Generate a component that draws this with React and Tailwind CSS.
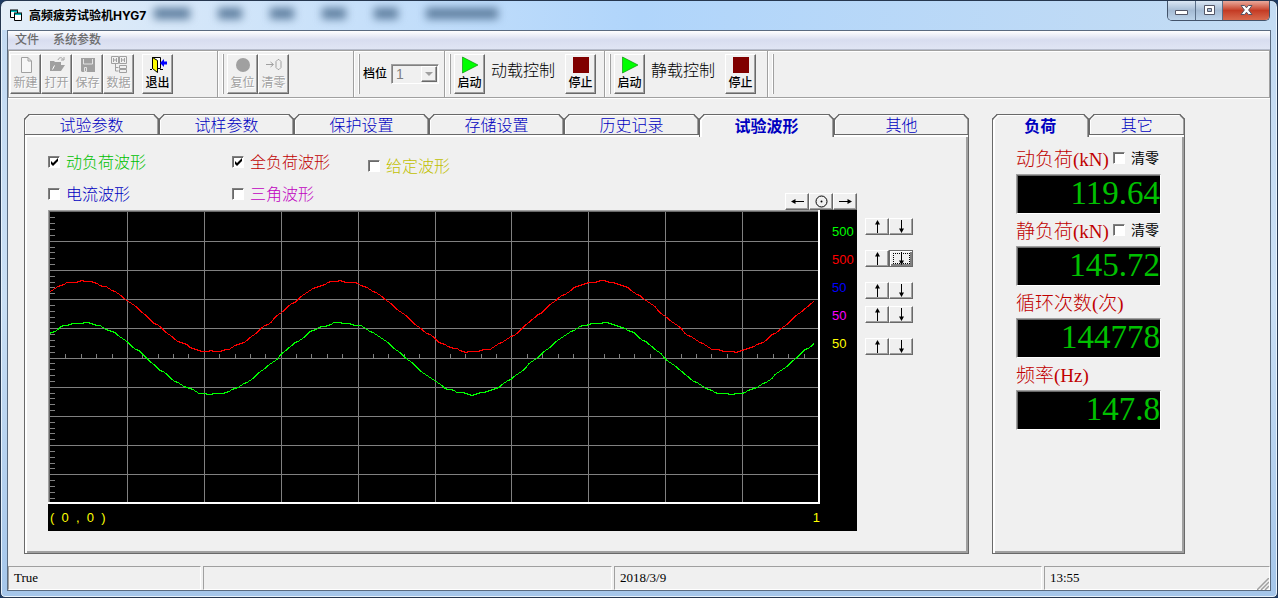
import React, { useState } from "react";

const RAISED =
  "border border-t-white border-l-white border-r-[#696969] border-b-[#696969] bg-[#f0f0f0] shadow-[inset_-1px_-1px_0_#a0a0a0]";
const SUNKEN =
  "border border-t-[#a0a0a0] border-l-[#a0a0a0] border-r-white border-b-white";
const BODY =
  "border border-[#696969] shadow-[inset_2px_2px_0_#fff,inset_-2px_-2px_0_#a0a0a0]";

const mainTabs = ["试验参数", "试样参数", "保护设置", "存储设置", "历史记录", "试验波形", "其他"];
const sideTabs = ["负荷", "其它"];

const waves = [
  { id: "dynamic", label: "动负荷波形", color: "text-[#00c000]", checked: true },
  { id: "full", label: "全负荷波形", color: "text-[#c00000]", checked: true },
  { id: "given", label: "给定波形", color: "text-[#c0c000]", checked: false, low: true },
  { id: "current", label: "电流波形", color: "text-[#0000c0]", checked: false },
  { id: "triangle", label: "三角波形", color: "text-[#c000c0]", checked: false },
];

const scales = [
  { value: "500", color: "text-[#00ff00]" },
  { value: "500", color: "text-[#ff0000]" },
  { value: "50", color: "text-[#0000ff]" },
  { value: "50", color: "text-[#ff00ff]" },
  { value: "50", color: "text-[#ffff00]" },
];

// scale buttons, grouped the way they sit beside the chart
const scaleGroups = [[0], [1], [2, 3], [4]];

const readings = [
  { label: "动负荷(kN)", value: "119.64", reset: true },
  { label: "静负荷(kN)", value: "145.72", reset: true },
  { label: "循环次数(次)", value: "144778" },
  { label: "频率(Hz)", value: "147.8" },
];

function buildWave(center, amp, seed) {
  const points = [];
  for (let x = 1; x <= 767; x += 3) {
    const noise = Math.sin(x * 0.37 + seed) * Math.sin(x * 0.113 + seed * 2) * 0.9;
    const y = center - amp * Math.cos(((x - 34) / 259.5) * Math.PI * 2) + noise;
    points.push(`${x},${Math.round(y)}.5`);
  }
  return points.join(" ");
}

function Check({ id, checked }) {
  return (
    <span className="relative flex h-3 w-3 shrink-0">
      <input
        id={id}
        type="checkbox"
        defaultChecked={checked}
        className="peer h-3 w-3 appearance-none border border-t-[#808080] border-l-[#808080] border-r-white border-b-white bg-white shadow-[inset_1px_1px_0_#696969]"
      />
      <svg
        viewBox="0 0 12 12"
        className="pointer-events-none absolute inset-0 hidden h-3 w-3 peer-checked:block"
      >
        <path d="M3 5v3l2 2 5-5V2L5 7z" fill="#000" />
      </svg>
    </span>
  );
}

function ToolButton({ label, disabled, children }) {
  return (
    <button
      type="button"
      disabled={disabled}
      className={`flex h-10 w-[31px] flex-col items-center pt-[1px] text-xs leading-[18px] ${RAISED} ${
        disabled ? "text-[#a0a0a0] [text-shadow:1px_1px_0_#fff]" : "font-medium text-black"
      }`}
    >
      <svg viewBox="0 0 18 18" className="h-[18px] w-[18px] shrink-0" fill="none">
        {children}
      </svg>
      <span className="whitespace-nowrap">{label}</span>
    </button>
  );
}

function Band({ className, first, children }) {
  return (
    <div
      className={`flex h-[46px] shrink-0 items-center ${
        first ? "" : "border-l border-[#a0a0a0] pl-[4px] shadow-[inset_1px_0_0_#fff]"
      } ${className}`}
    >
      {!first && (
        <span className="mr-[3px] h-10 w-[2px] shrink-0 border-r border-r-[#a0a0a0] bg-white" />
      )}
      {children}
    </div>
  );
}

function StartIcon() {
  return <path d="M1.500 1v16l15.500-8z" fill="#00ff00" stroke="#008000" strokeWidth="0.6" />;
}

function StopIcon() {
  return <path d="M1 1h16v16H1z" fill="#800000" />;
}

function Tabs({ items, active, onSelect }) {
  return (
    <div role="tablist" className="relative z-10 flex">
      {items.map((item, i) => (
        <button
          key={item}
          type="button"
          role="tab"
          aria-selected={i === active}
          onClick={() => onSelect(i)}
          className={`min-w-0 flex-1 rounded-t-[5px] border border-b-0 border-[#696969] bg-[#f0f0f0] text-base leading-5 text-[#0000c0] [corner-shape:bevel] ${
            i === active
              ? "-mb-[3px] h-[23px] font-bold shadow-[inset_2px_1px_0_#fff,inset_-1px_0_0_#a0a0a0]"
              : "h-5 font-light shadow-[inset_1px_1px_0_#fff,inset_-1px_0_0_#a0a0a0]"
          }`}
        >
          {item}
        </button>
      ))}
    </div>
  );
}

function ArrowButton({ dir, focused }) {
  const rotate = { up: 0, right: 90, down: 180, left: 270 }[dir];
  return (
    <button
      type="button"
      aria-label={dir}
      className={`flex h-[17px] w-6 items-center justify-center ${
        focused
          ? "border border-[#696969] bg-[#f0f0f0] shadow-[inset_1px_1px_0_#fff,inset_-2px_-2px_0_#808080]"
          : RAISED
      }`}
    >
      <span
        className={`flex h-[11px] w-[17px] items-center justify-center ${
          focused ? "border border-dotted border-black" : ""
        }`}
      >
        <svg viewBox="0 0 13 13" className="h-[13px] w-[13px] shrink-0">
          <g transform={`rotate(${rotate} 6.5 6.5)`}>
            <path d="M6 3h1v10H6z M6.5 0L9 4.5H4z" fill="#000" />
          </g>
        </svg>
      </span>
    </button>
  );
}

function Plot() {
  const cols = [1, 2, 3, 4, 5, 6, 7, 8, 9];
  const ticks = Array.from({ length: 49 }, (_, i) => i + 1);
  return (
    <svg
      viewBox="0 0 772 294"
      preserveAspectRatio="none"
      className="block h-[294px] w-full"
      fill="none"
      shapeRendering="crispEdges"
    >
      <g stroke="#808080">
        {cols.map((i) => (
          <path key={`v${i}`} d={`M${Math.round(2 + i * 76.9)}.5 2V292`} />
        ))}
        {cols.map((i) => (
          <path key={`h${i}`} d={`M2 ${Math.round(1.5 + i * 29.2)}.5H770`} />
        ))}
        {ticks.map((i) => (
          <path
            key={`t${i}`}
            d={`M2 ${Math.round(1.5 + i * 5.84)}.5h5 M${Math.round(2 + i * 15.38)}.5 144v5`}
          />
        ))}
      </g>
      <polyline points={buildWave(106, 35.3, 1)} stroke="#ff0000" />
      <polyline points={buildWave(148, 35.7, 2)} stroke="#00ff00" />
      <path d="M0 .5H771M.5 0V293" stroke="#a0a0a0" />
      <path d="M1 1.5H770M1.5 1V292" stroke="#696969" />
      <path d="M0 293H772M771 0V294" stroke="#fff" strokeWidth="2" />
    </svg>
  );
}

function TitleBar() {
  return (
    <header className="flex h-[29px] items-start justify-between overflow-hidden">
      <div className="flex h-full items-center gap-[6px] pl-[2px]">
        <svg viewBox="0 0 13 13" className="h-[13px] w-[13px]">
          <path d="M.5 1.500h7v7h-7z" fill="#fff" stroke="#000" />
          <path d="M4.500 4.500h7v7h-7z" fill="#fff" stroke="#000" />
          <path d="M1 1h6v2H1zM5 4h6v2H5z" fill="#00c0c0" />
          <path d="M0 1h8M4 4h8" stroke="#000" />
        </svg>
        <h1 className="text-xs font-bold whitespace-nowrap">高频疲劳试验机HYG7</h1>
        {/* window behind the glass */}
        <div aria-hidden="true" className="flex gap-7 pb-1 pl-[2px] blur-[4px]">
          <span className="h-[11px] w-9 bg-[#5d7d9e]" />
          <span className="h-[11px] w-6 bg-[#5d7d9e]" />
          <span className="h-[11px] w-6 bg-[#5d7d9e]" />
          <span className="h-[11px] w-6 bg-[#5d7d9e]" />
          <span className="h-[11px] w-6 bg-[#5d7d9e]" />
          <span className="h-[11px] w-[72px] bg-[#5d7d9e]" />
        </div>
      </div>
      <div className="flex h-5 overflow-hidden rounded-b-[5px] border border-t-0 border-[#43536a]">
        <button
          type="button"
          aria-label="最小化"
          className="flex w-7 items-center justify-center border-r border-[#5b6f88] bg-linear-to-b from-[#dbe7f4] via-[#a5bbd4] to-[#bcd3ea]"
        >
          <svg viewBox="0 0 13 11" className="h-[11px] w-[13px]">
            <path d="M.5 5.5h12v4H.5z" fill="#fff" stroke="#535666" />
          </svg>
        </button>
        <button
          type="button"
          aria-label="最大化"
          className="flex w-[27px] items-center justify-center border-r border-[#5b6f88] bg-linear-to-b from-[#dbe7f4] via-[#a5bbd4] to-[#bcd3ea]"
        >
          <svg viewBox="0 0 13 11" className="h-[11px] w-[13px]">
            <path
              d="M1.5.5h10v9h-10zM4.5 3.5v3h4v-3z"
              fill="#fff"
              fillRule="evenodd"
              stroke="#535666"
            />
          </svg>
        </button>
        <button
          type="button"
          aria-label="关闭"
          className="flex w-[46px] items-center justify-center bg-linear-to-b from-[#e9a99c] via-[#c43b24] to-[#d8694d]"
        >
          <svg viewBox="0 0 13 11" className="h-[11px] w-[13px]">
            <path
              d="M1 .5h3.6L6.500 2.800 8.400.5H12L8.600 5 12 9.500H8.400L6.500 7.200 4.600 9.500H1L4.400 5z"
              fill="#fff"
              stroke="#535666"
            />
          </svg>
        </button>
      </div>
    </header>
  );
}

function Toolbar() {
  return (
    <div className="flex h-12 overflow-hidden border border-[#a0a0a0] shadow-[inset_1px_1px_0_#fff,0_1px_0_#fff]">
      <Band first className="w-[208px] pl-[1px]">
        <ToolButton label="新建" disabled>
          <path d="M4.500 1.500H11l3.500 3.500v11.500h-10zM11 1.500V5h3.500" stroke="#a0a0a0" fill="#f6f6f6" />
        </ToolButton>
        <ToolButton label="打开" disabled>
          <path d="M2 15V5h4l1 1h6v3h4l-4 6z" fill="#a0a0a0" />
          <path d="M4.500 13.500l2-4" stroke="#fff" />
          <path d="M10 4c1-3 4-3 5-.5M16 1v3h-3" stroke="#a0a0a0" />
        </ToolButton>
        <ToolButton label="保存" disabled>
          <path d="M2 2h14v14H3l-1-1z" fill="#a0a0a0" />
          <path d="M5.500 11.500h2v4h-2zM4.500 3v5h9V3" stroke="#e4e4e4" />
        </ToolButton>
        <ToolButton label="数据" disabled>
          <path
            d="M1.500.5h7v7h-7zM9.500.5h7v7h-7zM3.500 2v4M6.500 2v4M3.500 4h3M11.500 2v4M14.500 2v4M11.500 4h3M5.500 8v7h3M5.500 11.500h3M9.500 9.500h7v3h-7zM9.500 13.500h7v3h-7z"
            stroke="#a0a0a0"
          />
        </ToolButton>
        <div className="ml-2">
          <ToolButton label="退出">
            <path d="M3.500 1.500h8v11h-8z" fill="#fff" stroke="#000" />
            <path d="M3.500 1.500l5 3v12l-5-4z" fill="#ffff00" stroke="#000" />
            <path d="M1 13.500h2M11 13.500h3" stroke="#000" />
            <path d="M11 7l4-4v2.500h3v3h-3V11z" fill="#0000ff" />
          </ToolButton>
        </div>
      </Band>
      <Band className="w-[136px]">
        <ToolButton label="复位" disabled>
          <circle cx="9" cy="9" r="7" fill="#a0a0a0" />
        </ToolButton>
        <ToolButton label="清零" disabled>
          <path d="M1 8.500h7M5.500 6l3 2.500-3 2.500M13 3.500h1l2 2v6l-2 2h-1l-2-2v-6z" stroke="#a0a0a0" />
        </ToolButton>
      </Band>
      <Band className="w-[91px]">
        <label htmlFor="gear" className="text-xs font-medium whitespace-nowrap text-black">
          档位
        </label>
        <div className="relative ml-1">
          <select
            id="gear"
            disabled
            className="block h-5 w-12 appearance-none border border-[#a0a0a0] border-r-white border-b-white bg-[#f0f0f0] pl-1 font-['Liberation_Sans'] text-sm leading-4 text-[#808080] shadow-[inset_1px_1px_0_#808080]"
          >
            <option>1</option>
          </select>
          <span
            className={`pointer-events-none absolute top-[2px] right-[2px] flex h-4 w-4 items-center justify-center ${RAISED}`}
          >
            <svg viewBox="0 0 8 4" className="h-1 w-2">
              <path d="M0 0h8L4 4z" fill="#a0a0a0" />
            </svg>
          </span>
        </div>
      </Band>
      <Band className="w-40">
        <ToolButton label="启动">
          <StartIcon />
        </ToolButton>
        <span className="mx-[6px] mb-2 w-[68px] text-base leading-5 font-light whitespace-nowrap">
          动载控制
        </span>
        <ToolButton label="停止">
          <StopIcon />
        </ToolButton>
      </Band>
      <Band className="w-[163px]">
        <ToolButton label="启动">
          <StartIcon />
        </ToolButton>
        <span className="mx-[6px] mb-2 w-[68px] text-base leading-5 font-light whitespace-nowrap">
          静载控制
        </span>
        <ToolButton label="停止">
          <StopIcon />
        </ToolButton>
      </Band>
      <Band className="w-5" />
    </div>
  );
}

function WavePanel() {
  return (
    <div className={`flex flex-1 pl-[23px] pb-[22px] pr-[55px] ${BODY}`}>
      <div className="min-w-0 flex-1">
        <div className="flex items-end justify-between pt-[11px]">
          <div className="grid auto-rows-[32px] grid-cols-[184px_136px_120px]">
            {waves.map((wave) => (
              <div
                key={wave.id}
                className={`flex h-6 items-center gap-[6px] ${wave.low ? "self-end" : "self-center"}`}
              >
                <Check id={wave.id} checked={wave.checked} />
                <label
                  htmlFor={wave.id}
                  className={`text-base leading-6 font-light whitespace-nowrap ${wave.color}`}
                >
                  {wave.label}
                </label>
              </div>
            ))}
          </div>
          <div className="flex">
            <ArrowButton dir="left" />
            <button
              type="button"
              aria-label="center"
              className={`flex h-[17px] w-6 items-center justify-center ${RAISED}`}
            >
              <svg viewBox="0 0 13 13" className="h-[13px] w-[13px] shrink-0">
                <circle cx="6.5" cy="6.5" r="5.5" fill="none" stroke="#000" />
                <circle cx="6.5" cy="6.5" r="1" fill="#000" />
              </svg>
            </button>
            <ArrowButton dir="right" />
          </div>
        </div>
        <div className="flex bg-black font-['Liberation_Sans'] text-[13px]">
          <div className="min-w-0 flex-1">
            <Plot />
            <div className="flex h-[27px] items-center justify-between pl-[2px] leading-6 text-[#ffff00]">
              <span className="whitespace-pre">{"(  0  ,  0  )"}</span>
              <span>1</span>
            </div>
          </div>
          <div className="w-[37px] pt-2 pl-3">
            {scales.map((scale, i) => (
              <div key={i} className={`leading-7 ${scale.color}`}>
                {scale.value}
              </div>
            ))}
          </div>
        </div>
      </div>
      <div className="ml-2 flex flex-col gap-[15px] pt-[83px]">
        {scaleGroups.map((group) => (
          <div key={group[0]} className="flex flex-col gap-[7px]">
            {group.map((n) => (
              <div key={n} className="flex">
                <ArrowButton dir="up" />
                <ArrowButton dir="down" focused={n === 1} />
              </div>
            ))}
          </div>
        ))}
      </div>
    </div>
  );
}

function LoadPanel() {
  return (
    <div className={`flex-1 px-[23px] pt-[7px] ${BODY}`}>
      {readings.map((item, i) => (
        <div key={item.label}>
          <div className="flex h-8 items-center">
            <span className="pt-1 font-['Liberation_Serif','Noto_Sans_CJK_SC',serif] text-[19px] leading-7 font-light whitespace-nowrap text-[#c00000]">
              {item.label}
            </span>
            {item.reset && (
              <span className="ml-auto flex items-center gap-[6px] pr-[2px]">
                <Check id={`reset${i}`} />
                <label htmlFor={`reset${i}`} className="text-sm whitespace-nowrap">
                  清零
                </label>
              </span>
            )}
          </div>
          <div
            className={`h-10 bg-black text-right font-['Liberation_Serif'] text-[33px] leading-9 text-[#00c000] shadow-[inset_1px_1px_0_#696969] ${SUNKEN}`}
          >
            {item.value}
          </div>
        </div>
      ))}
    </div>
  );
}

function StatusBar() {
  const pane = `h-6 truncate pl-[5px] leading-[22px] ${SUNKEN}`;
  return (
    <footer className="relative flex gap-[2px] font-['Liberation_Serif'] text-[13px] text-black">
      <div className={`w-[193px] ${pane}`}>True</div>
      <div className={`w-[409px] ${pane}`} />
      <div className={`min-w-0 flex-1 ${pane}`}>2018/3/9</div>
      <div className={`w-[226px] ${pane}`}>13:55</div>
      <svg viewBox="0 0 12 12" className="absolute right-[1px] bottom-0 h-3 w-3">
        <path d="M0 12L12 0M4 12l8-8M8 12l4-4" stroke="#a0a0a0" strokeWidth="1.5" />
      </svg>
    </footer>
  );
}

function App() {
  const [mainTab, setMainTab] = useState(5);
  const [sideTab, setSideTab] = useState(0);

  return (
    <div className="min-h-screen bg-[#1d3a63] font-['Inter','Noto_Sans_CJK_SC',sans-serif] text-black">
      <div className="flex min-h-screen flex-col rounded-t-[7px] rounded-b-[5px] border border-[#26374f] bg-linear-to-b from-[#c3daf2] via-[#c9dff5] to-[#a5c6ea] px-[6px] pb-[6px] shadow-[inset_0_0_0_1px_#e8f3fd]">
        <div className="-mx-[5px] rounded-t-[6px] bg-linear-to-r from-[#e4eef8] via-[#b0d5fb] to-[#c4dcf3] px-[6px]">
          <TitleBar />
        </div>
        <div className="flex flex-1 flex-col border border-[#5a6b80] bg-[#f0f0f0]">
          <nav className="flex h-[19px] items-center gap-[14px] border-b border-[#b6bccc] bg-linear-to-b from-white via-[#d8ddef] to-[#e0e5f4] pl-[7px] text-xs font-medium">
            <button type="button" className="text-[#6d6d6d]">
              文件
            </button>
            <button type="button" className="text-[#6d6d6d]">
              系统参数
            </button>
          </nav>
          <Toolbar />
          <main className="flex flex-1 pt-4 pr-[85px] pb-3 pl-4">
            <section className="flex min-w-0 flex-1 flex-col">
              <Tabs items={mainTabs} active={mainTab} onSelect={setMainTab} />
              <WavePanel />
            </section>
            <section className="ml-[23px] flex w-[193px] shrink-0 flex-col">
              <Tabs items={sideTabs} active={sideTab} onSelect={setSideTab} />
              <LoadPanel />
            </section>
          </main>
          <StatusBar />
        </div>
      </div>
    </div>
  );
}

export default App;
